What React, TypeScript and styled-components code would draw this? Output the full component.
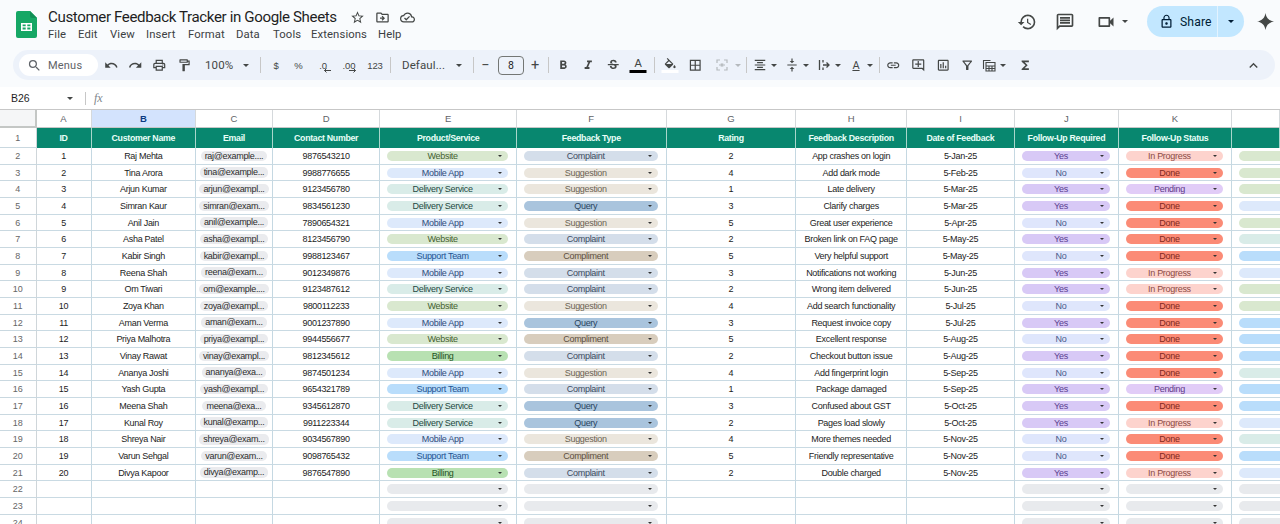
import React from "react";
import styled, { createGlobalStyle } from "styled-components";
import {
  MdSearch, MdUndo, MdRedo, MdOutlinePrint, MdOutlineFormatPaint, MdStarBorder, MdHistory,
  MdOutlineVideocam, MdLockOutline, MdFormatBold, MdFormatItalic, MdStrikethroughS,
  MdBorderAll, MdFormatAlignCenter, MdVerticalAlignCenter, MdLink, MdOutlineAddComment,
  MdOutlineInsertChart, MdFunctions, MdKeyboardArrowUp, MdOutlineCloudDone, MdOutlineDriveFileMove,
  MdOutlineFormatColorFill, MdOutlineFilterAlt, MdOutlineMessage,
} from "react-icons/md";

const Global = createGlobalStyle`
  html, body { margin: 0; padding: 0; height: 100%; overflow: hidden; background: #fff; }
  #root { height: 100%; }
  * { box-sizing: border-box; }
`;

const Page = styled.div`
  width: 1280px; height: 524px; overflow: hidden; display: flex; flex-direction: column;
  background: #f9fbfd; font-family: "Roboto", "Liberation Sans", sans-serif; color: #444746;
`;
const TopBar = styled.header`
  height: 50px; flex: none; display: flex; align-items: flex-start; padding: 6px 6px 0 16px;
`;
const Logo = styled.svg`width: 21px; height: 27px; margin-top: 5px; flex: none;`;
const TitleBlock = styled.div`margin-left: 11px; padding-top: 1px; flex: 1; display: flex; flex-direction: column;`;
const TitleRow = styled.div`display: flex; align-items: center; height: 20px;`;
const Title = styled.h1`
  margin: 0; font-size: 15.1px; letter-spacing: -0.38px; font-weight: 400; color: #1f1f1f; white-space: nowrap; width: 297px;
`;
const TitleIcon = styled.span<{ $w: number }>`
  width: ${(p) => p.$w}px; display: flex; justify-content: center; color: #444746; font-size: 15px;
`;
const Menu = styled.nav`display: flex; height: 15px; align-items: center;`;
const MenuItem = styled.span<{ $w: number }>`
  width: ${(p) => p.$w}px; font-size: 11.3px; color: #3c4043; letter-spacing: 0.1px; white-space: nowrap;
`;
const RightTools = styled.div`display: flex; align-items: center; height: 31px; flex: none;`;
const RightIcon = styled.span<{ $w: number }>`
  width: ${(p) => p.$w}px; display: flex; align-items: center; justify-content: center; gap: 6px; color: #444746; font-size: 20px;
`;
const ShareGroup = styled.div`
  display: flex; width: 97px; height: 31px; border-radius: 16px; background: #c2e7ff; overflow: hidden; margin-left: 7px;
`;
const ShareMain = styled.div`
  width: 71px; display: flex; align-items: center; padding-left: 12px; gap: 6px; font-size: 12.2px; color: #001d35;
  border-right: 1px solid #e3f3ff; letter-spacing: .1px;
`;
const ShareCaret = styled.div`flex: 1; display: flex; align-items: center; justify-content: center;`;
const Spark = styled.svg`width: 17px; height: 17px; margin-left: 13px; flex: none;`;
const Caret = styled.i<{ $c?: string; $s?: number }>`
  display: inline-block; width: 0; height: 0; flex: none;
  border-left: ${(p) => p.$s ?? 3}px solid transparent; border-right: ${(p) => p.$s ?? 3}px solid transparent;
  border-top: ${(p) => p.$s ?? 3}px solid ${(p) => p.$c ?? "#444746"};
`;

const Toolbar = styled.div`
  flex: none; height: 30px; margin: 0 5px 0 13px; border-radius: 15px; background: #edf2fa;
  display: flex; align-items: center; padding-left: 6px;
`;
const SearchPill = styled.div`
  width: 79px; height: 22px; margin-right: 1px; border-radius: 11px; background: #fff; display: flex; align-items: center;
  padding-left: 8px; gap: 6px; font-size: 11px; color: #5f6368; letter-spacing: .2px;
`;
const ToolBtn = styled.span<{ $w: number; $off?: boolean }>`
  width: ${(p) => p.$w}px; height: 30px; flex: none; display: flex; align-items: center; justify-content: center; position: relative;
  font-size: 14.5px; color: ${(p) => (p.$off ? "#b5b9bd" : "#444746")};
`;
const TextBtn = styled(ToolBtn)`font-size: 9.5px; letter-spacing: -.1px; font-family: "Liberation Sans", sans-serif;`;
const DropBtn = styled.span<{ $w: number }>`
  width: ${(p) => p.$w}px; height: 30px; flex: none; display: flex; align-items: center; justify-content: space-between;
  padding: 0 5px 0 9px; font-size: 11.5px; color: #444746; letter-spacing: .1px;
`;
const IconDrop = styled.span<{ $w: number }>`
  width: ${(p) => p.$w}px; height: 30px; flex: none; display: flex; align-items: center; padding-left: 2px; gap: 4px; font-size: 14px; color: #444746;
`;
const Sep = styled.span<{ $w: number }>`
  width: ${(p) => p.$w}px; height: 16px; flex: none; display: flex; justify-content: center;
  &::after { content: ""; width: 1px; height: 100%; background: #c7c7c7; }
`;
const SizeBox = styled.span`
  width: 26px; height: 19px; margin-left: 6px; flex: none; border: 1px solid #747775; border-radius: 4px; display: flex;
  align-items: center; justify-content: center; font-size: 10.5px; color: #1f1f1f;
`;
const ColorBar = styled.i<{ $c: string }>`
  position: absolute; left: 50%; transform: translateX(-50%); bottom: 7px; width: 17px; height: 3px; background: ${(p) => p.$c};
`;
const ColorLetter = styled.span`margin-top: -4px; font-size: 11px;`;
const SmallArrow = styled.svg`position: absolute; left: 50%; bottom: 7px; width: 8px; height: 5px;`;
const Glyph = styled.svg`width: 14px; height: 14px; flex: none;`;
const TextA = styled.span`font-size: 11px; width: 14px; text-align: center; text-decoration: underline;`;
const Chevron = styled.span`margin-left: auto; margin-right: 10px; width: 24px; display: flex; justify-content: center; font-size: 17px; color: #444746;`;

const FormulaBar = styled.div`
  flex: none; margin-top: 7px; height: 22px; background: #fff; display: flex; align-items: center; font-family: "Liberation Sans", sans-serif;
`;
const CellRef = styled.span`width: 67px; padding-left: 11px; font-size: 10.5px; color: #1f1f1f;`;
const RefDivider = styled.span`width: 1px; height: 13px; background: #c7c7c7; margin-left: 12px;`;
const Fx = styled.span`margin-left: 8px; font: italic 12px "Liberation Serif", serif; color: #80868b;`;

const COLUMNS = "36.5px 55px 104.7px 76.6px 107.7px 136.3px 150px 129.4px 111px 107.6px 104.4px 112.6px 48.2px";

const Sheet = styled.div`
  flex: 1; min-height: 0; overflow: hidden; background: #fff; border-top: 1px solid #c7c7c7;
  font-family: "Liberation Sans", Arial, sans-serif;
`;
const ColHeadRow = styled.div`display: grid; grid-template-columns: ${COLUMNS}; height: 18px;`;
const Corner = styled.div`background: #f5f6f7; border-right: 2.5px solid #c4c7c5; border-bottom: 2.5px solid #c4c7c5;`;
const ColHead = styled.div<{ $on?: boolean }>`
  display: flex; align-items: center; justify-content: center; font-size: 9.5px;
  background: ${(p) => (p.$on ? "#d3e3fd" : "#fff")}; color: ${(p) => (p.$on ? "#0b3a82" : "#5f6368")}; font-weight: ${(p) => (p.$on ? 700 : 400)};
  border-right: 1px solid #d5d9dc; border-bottom: 1px solid #c7c7c7;
`;
const HeadRow = styled.div`display: grid; grid-template-columns: ${COLUMNS}; height: 20px;`;
const RowNum = styled.div`
  display: flex; align-items: center; justify-content: center; font-size: 9px; color: #666; background: #fff;
  border-right: 1px solid #cfd6da; border-bottom: 1px solid #c9d8e0;
`;
const HeadCell = styled.div`
  display: flex; align-items: center; justify-content: center; background: #08876f; color: #e9fff8; font-size: 8.8px; font-weight: 700;
  letter-spacing: -0.3px; border-right: 1px solid #a9d6cb; white-space: nowrap;
`;
const DataRow = styled.div`display: grid; grid-template-columns: ${COLUMNS}; height: 16.68px;`;
const Cell = styled.div`
  display: flex; align-items: center; justify-content: center; font-size: 9px; letter-spacing: -0.3px; color: #1c1c1c; white-space: nowrap; min-width: 0; overflow: hidden;
  border-right: 1px solid #c5d8e2; border-bottom: 1px solid #c9dae3;
`;
const ChipCell = styled(Cell)`justify-content: flex-start; padding-left: 7px; padding-right: 8px;`;
const ClipCell = styled(Cell)`justify-content: flex-start; padding-left: 7px; border-right: none;`;
const EmailChip = styled.span`
  height: 10.5px; line-height: 10.5px; padding: 0 4px; border-radius: 5px; background: #eaebee; color: #2c2c2c;
`;
const Chip = styled.div<{ $bg: string; $fg: string }>`
  width: 100%; height: 10px; border-radius: 5px; background: ${(p) => p.$bg}; color: ${(p) => p.$fg};
  display: flex; align-items: center; position: relative; justify-content: center; padding-right: 10px; flex: none;
`;
const ChipCaret = styled.span`position: absolute; right: 6px; top: 4px; display: flex;`;
const WideChip = styled(Chip)`width: 60px;`;

type Tone = [string, string];
const tones: Record<string, Tone> = {
  Website: ["#d9e8cf", "#44612f"],
  "Mobile App": ["#dde9fb", "#2f4c7a"],
  "Delivery Service": ["#d9ece8", "#25493f"],
  "Support Team": ["#b9ddfb", "#1e5290"],
  Billing: ["#b8e1b2", "#1e521e"],
  Complaint: ["#d4deea", "#3c4b5e"],
  Suggestion: ["#ebe6dd", "#6d6455"],
  Query: ["#a9c4dd", "#29455f"],
  Compliment: ["#d8cdbd", "#5c4e3e"],
  Yes: ["#d8c9f6", "#5b4090"],
  No: ["#dfe6fc", "#4b5b8a"],
  "In Progress": ["#fdd3cd", "#8c4b45"],
  Done: ["#fb8b76", "#80291d"],
  Pending: ["#e1ccf7", "#5f3b88"],
  "": ["#e8eaed", "#222"],
};

const rows: string[][] = [
  ["Raj Mehta","raj@example....","9876543210","Website","Complaint","2","App crashes on login","5-Jan-25","Yes","In Progress","Website"],
  ["Tina Arora","tina@example...","9988776655","Mobile App","Suggestion","4","Add dark mode","5-Feb-25","No","Done","Website"],
  ["Arjun Kumar","arjun@exampl...","9123456780","Delivery Service","Suggestion","1","Late delivery","5-Mar-25","Yes","Pending","Website"],
  ["Simran Kaur","simran@exam...","9834561230","Delivery Service","Query","3","Clarify charges","5-Mar-25","Yes","Done","Mobile App"],
  ["Anil Jain","anil@example...","7890654321","Mobile App","Suggestion","5","Great user experience","5-Apr-25","No","Done","Website"],
  ["Asha Patel","asha@exampl...","8123456790","Website","Complaint","2","Broken link on FAQ page","5-May-25","Yes","Done","Delivery Service"],
  ["Kabir Singh","kabir@exampl...","9988123467","Support Team","Compliment","5","Very helpful support","5-May-25","No","Done","Support Team"],
  ["Reena Shah","reena@exam...","9012349876","Mobile App","Complaint","3","Notifications not working","5-Jun-25","Yes","In Progress","Mobile App"],
  ["Om Tiwari","om@example....","9123487612","Delivery Service","Complaint","2","Wrong item delivered","5-Jun-25","Yes","In Progress","Website"],
  ["Zoya Khan","zoya@exampl...","9800112233","Website","Suggestion","4","Add search functionality","5-Jul-25","No","Done","Website"],
  ["Aman Verma","aman@exam...","9001237890","Mobile App","Query","3","Request invoice copy","5-Jul-25","Yes","Done","Support Team"],
  ["Priya Malhotra","priya@exampl...","9944556677","Website","Compliment","5","Excellent response","5-Aug-25","No","Done","Support Team"],
  ["Vinay Rawat","vinay@exampl...","9812345612","Billing","Complaint","2","Checkout button issue","5-Aug-25","Yes","Done","Support Team"],
  ["Ananya Joshi","ananya@exa...","9874501234","Mobile App","Suggestion","4","Add fingerprint login","5-Sep-25","No","Done","Delivery Service"],
  ["Yash Gupta","yash@exampl...","9654321789","Support Team","Complaint","1","Package damaged","5-Sep-25","Yes","Pending","Support Team"],
  ["Meena Shah","meena@exa...","9345612870","Delivery Service","Query","3","Confused about GST","5-Oct-25","Yes","Done","Support Team"],
  ["Kunal Roy","kunal@examp...","9911223344","Delivery Service","Query","2","Pages load slowly","5-Oct-25","Yes","In Progress","Mobile App"],
  ["Shreya Nair","shreya@exam...","9034567890","Mobile App","Suggestion","4","More themes needed","5-Nov-25","No","Done","Delivery Service"],
  ["Varun Sehgal","varun@exam...","9098765432","Support Team","Compliment","5","Friendly representative","5-Nov-25","No","Done","Support Team"],
  ["Divya Kapoor","divya@examp...","9876547890","Billing","Complaint","2","Double charged","5-Nov-25","Yes","In Progress","Mobile App"],
];

const heads = ["ID","Customer Name","Email","Contact Number","Product/Service","Feedback Type","Rating","Feedback Description","Date of Feedback","Follow-Up Required","Follow-Up Status",""];
const letters = ["A","B","C","D","E","F","G","H","I","J","K",""];

function Pill({ v, wide }: { v: string; wide?: boolean }) {
  const [bg, fg] = tones[v];
  const Comp = wide ? WideChip : Chip;
  return (
    <Comp $bg={bg} $fg={fg}>
      {wide ? "" : v}
      {!wide && <ChipCaret><Caret $c="#333" $s={2.5} /></ChipCaret>}
    </Comp>
  );
}

function SheetsLogo() {
  return (
    <Logo viewBox="0 0 21 27">
      <path d="M2 0h12l7 7v18a2 2 0 0 1-2 2H2a2 2 0 0 1-2-2V2a2 2 0 0 1 2-2z" fill="#16a765" />
      <path d="M14 0l7 7h-5a2 2 0 0 1-2-2z" fill="#0f8f55" />
      <path d="M5 12h11v8H5zm1.6 1.5v1.8h3.1v-1.8zm4.7 0v1.8h3.1v-1.8zm-4.7 3.1v1.9h3.1v-1.9zm4.7 0v1.9h3.1v-1.9z" fill="#fff" fillRule="evenodd" />
    </Logo>
  );
}

function Row({ n, d }: { n: number; d: string[] }) {
  return (
    <DataRow>
      <RowNum>{n + 2}</RowNum>
      <Cell>{n + 1}</Cell>
      <Cell>{d[0]}</Cell>
      <Cell><EmailChip>{d[1]}</EmailChip></Cell>
      <Cell>{d[2]}</Cell>
      <ChipCell><Pill v={d[3]} /></ChipCell>
      <ChipCell><Pill v={d[4]} /></ChipCell>
      <Cell>{d[5]}</Cell>
      <Cell>{d[6]}</Cell>
      <Cell>{d[7]}</Cell>
      <ChipCell><Pill v={d[8]} /></ChipCell>
      <ChipCell><Pill v={d[9]} /></ChipCell>
      <ClipCell><Pill v={d[10]} wide /></ClipCell>
    </DataRow>
  );
}

function EmptyRow({ n }: { n: number }) {
  return (
    <DataRow>
      <RowNum>{n}</RowNum>
      <Cell /><Cell /><Cell /><Cell />
      <ChipCell><Pill v="" /></ChipCell>
      <ChipCell><Pill v="" /></ChipCell>
      <Cell /><Cell /><Cell />
      <ChipCell><Pill v="" /></ChipCell>
      <ChipCell><Pill v="" /></ChipCell>
      <ClipCell><Pill v="" wide /></ClipCell>
    </DataRow>
  );
}

export default function App() {
  return (
    <Page>
      <Global />
      <TopBar>
        <SheetsLogo />
        <TitleBlock>
          <TitleRow>
            <Title>Customer Feedback Tracker in Google Sheets</Title>
            <TitleIcon $w={25}><MdStarBorder /></TitleIcon>
            <TitleIcon $w={25}><MdOutlineDriveFileMove /></TitleIcon>
            <TitleIcon $w={25}><MdOutlineCloudDone /></TitleIcon>
          </TitleRow>
          <Menu>
            <MenuItem $w={30}>File</MenuItem>
            <MenuItem $w={32}>Edit</MenuItem>
            <MenuItem $w={36}>View</MenuItem>
            <MenuItem $w={42}>Insert</MenuItem>
            <MenuItem $w={48}>Format</MenuItem>
            <MenuItem $w={37}>Data</MenuItem>
            <MenuItem $w={38}>Tools</MenuItem>
            <MenuItem $w={67}>Extensions</MenuItem>
            <MenuItem $w={30}>Help</MenuItem>
          </Menu>
        </TitleBlock>
        <RightTools>
          <RightIcon $w={38}><MdHistory /></RightIcon>
          <RightIcon $w={38}><MdOutlineMessage /></RightIcon>
          <RightIcon $w={56}><MdOutlineVideocam /><Caret /></RightIcon>
          <ShareGroup>
            <ShareMain><MdLockOutline size={15} />Share</ShareMain>
            <ShareCaret><Caret $c="#001d35" /></ShareCaret>
          </ShareGroup>
          <Spark viewBox="0 0 24 24"><path d="M12 0c1 7 5 11 12 12-7 1-11 5-12 12-1-7-5-11-12-12 7-1 11-5 12-12z" fill="#444746" /></Spark>
        </RightTools>
      </TopBar>

      <Toolbar>
        <SearchPill><MdSearch size={15} />Menus</SearchPill>
        <ToolBtn $w={24}><MdUndo /></ToolBtn>
        <ToolBtn $w={24}><MdRedo /></ToolBtn>
        <ToolBtn $w={25}><MdOutlinePrint /></ToolBtn>
        <ToolBtn $w={24}><MdOutlineFormatPaint /></ToolBtn>
        <DropBtn $w={58}>100%<Caret /></DropBtn>
        <Sep $w={12} />
        <TextBtn $w={20}>$</TextBtn>
        <TextBtn $w={25}>%</TextBtn>
        <TextBtn $w={24}>.0<SmallArrow viewBox="0 0 8 5"><path d="M8 2.5H1.5M3.5.5l-2 2 2 2" fill="none" stroke="#444746" /></SmallArrow></TextBtn>
        <TextBtn $w={28}>.00<SmallArrow viewBox="0 0 8 5"><path d="M0 2.5h6.5M4.5.5l2 2-2 2" fill="none" stroke="#444746" /></SmallArrow></TextBtn>
        <TextBtn $w={24}>123</TextBtn>
        <Sep $w={6} />
        <DropBtn $w={74}>Defaul...<Caret /></DropBtn>
        <Sep $w={12} />
        <ToolBtn $w={13}>−</ToolBtn>
        <SizeBox>8</SizeBox>
        <ToolBtn $w={22}>+</ToolBtn>
        <Sep $w={4} />
        <ToolBtn $w={26}><MdFormatBold /></ToolBtn>
        <ToolBtn $w={25}><MdFormatItalic /></ToolBtn>
        <ToolBtn $w={25}><MdStrikethroughS /></ToolBtn>
        <TextBtn $w={24}><ColorLetter>A</ColorLetter><ColorBar $c="#000" /></TextBtn>
        <Sep $w={8} />
        <ToolBtn $w={24}><MdOutlineFormatColorFill /><ColorBar $c="#fff" /></ToolBtn>
        <ToolBtn $w={27}><MdBorderAll /></ToolBtn>
        <ToolBtn $w={26} $off>
          <Glyph viewBox="0 0 14 14"><path d="M2 5V2h3M9 2h3v3M2 9v3h3M9 12h3V9M4 7h2M6 5.5 7 7 6 8.500M10 7H8M8 5.500 7 7l1 1.500" fill="none" stroke="#b5b9bd" strokeWidth="1.200" /></Glyph>
        </ToolBtn>
        <ToolBtn $w={6}><Caret $c="#b5b9bd" /></ToolBtn>
        <Sep $w={10} />
        <IconDrop $w={32}><MdFormatAlignCenter /><Caret /></IconDrop>
        <IconDrop $w={32}><MdVerticalAlignCenter /><Caret /></IconDrop>
        <IconDrop $w={32}>
          <Glyph viewBox="0 0 14 14"><path d="M2.500 2v10M6 7h6M9.500 4.500 12 7l-2.500 2.500M6 2v2.500M6 9.500V12" fill="none" stroke="#444746" strokeWidth="1.300" /></Glyph>
          <Caret />
        </IconDrop>
        <IconDrop $w={31}><TextA>A</TextA><Caret /></IconDrop>
        <Sep $w={2} />
        <ToolBtn $w={26}><MdLink /></ToolBtn>
        <ToolBtn $w={25}><MdOutlineAddComment /></ToolBtn>
        <ToolBtn $w={24}><MdOutlineInsertChart /></ToolBtn>
        <ToolBtn $w={25}><MdOutlineFilterAlt /></ToolBtn>
        <IconDrop $w={34}>
          <Glyph viewBox="0 0 14 14"><path d="M1.500 11V2.500h7M4 4.500h9v8.500H4zM4 8h9M4 10.500h9M7 8v5M10 8v5" fill="none" stroke="#444746" strokeWidth="1.100" /></Glyph>
          <Caret />
        </IconDrop>
        <ToolBtn $w={22}><MdFunctions /></ToolBtn>
        <Chevron><MdKeyboardArrowUp /></Chevron>
      </Toolbar>

      <FormulaBar>
        <CellRef>B26</CellRef>
        <Caret />
        <RefDivider />
        <Fx>fx</Fx>
      </FormulaBar>

      <Sheet>
        <ColHeadRow>
          <Corner />
          {letters.map((l, i) => <ColHead key={i} $on={l === "B"}>{l}</ColHead>)}
        </ColHeadRow>
        <HeadRow>
          <RowNum>1</RowNum>
          {heads.map((h, i) => <HeadCell key={i}>{h}</HeadCell>)}
        </HeadRow>
        {rows.map((d, i) => <Row key={i} n={i} d={d} />)}
        {[22, 23, 24].map((n) => <EmptyRow key={n} n={n} />)}
      </Sheet>
    </Page>
  );
}
